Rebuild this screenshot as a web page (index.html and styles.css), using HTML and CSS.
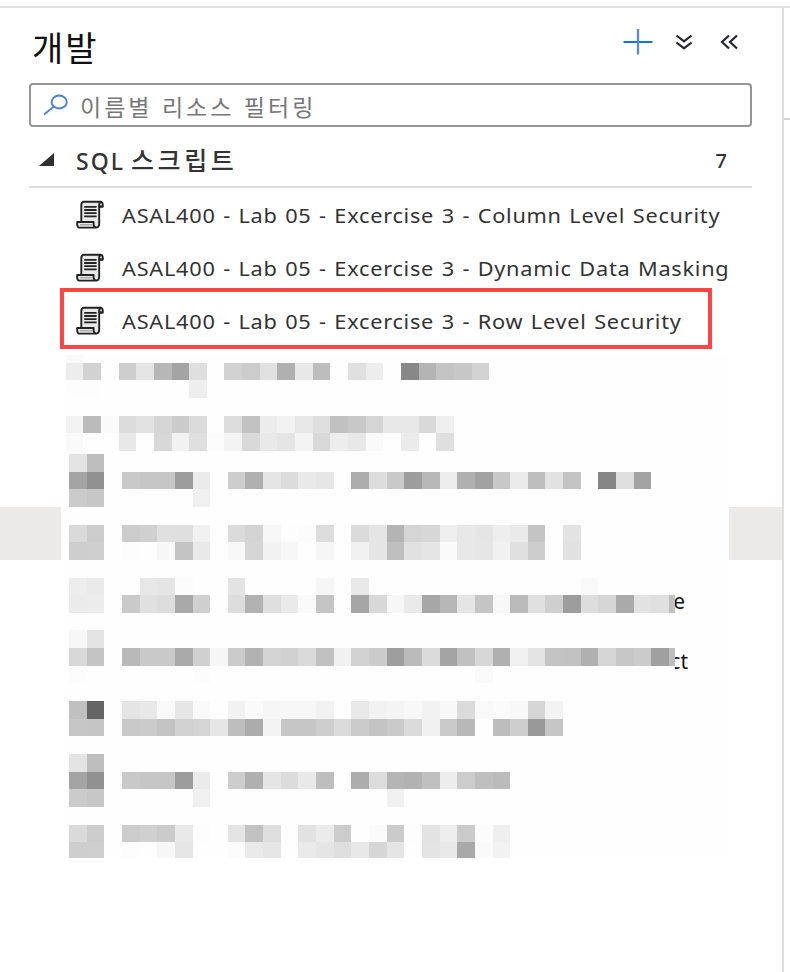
FILE: index.html
```html
<!DOCTYPE html>
<html lang="ko">
<head>
<meta charset="utf-8">
<title>개발</title>
<link rel="stylesheet" href="styles.css">
</head>
<body>
<svg class="defs" width="0" height="0" aria-hidden="true">
  <symbol id="script" viewBox="0 0 30 30">
    <path d="M6.300 21.800V5Q6.300 1.800 9 1.800H25.600Q28.200 2 27.800 6.600L24.200 6.800V24Q24 27.400 21.400 27.600H4Q1.800 27 2.200 22H18.600V24.600Q19 27.400 21.400 27.400" fill="#e8e8e8" stroke="#222" stroke-width="1.900" stroke-linejoin="round"/>
    <path d="M24.200 6.800V4.200Q24.400 2.400 25.800 2M24.200 6.600H27.600" fill="none" stroke="#222" stroke-width="2"/>
    <path d="M9.200 6.800H21.600M9.200 10H21.600M9.200 13.200H21.600M9.200 16.400H21.600" stroke="#222" stroke-width="1.800"/>
    <path d="M5 24.700H18" stroke="#aaa" stroke-width="1.400"/>
  </symbol>
</svg>
<div class="app">
  <main class="panel">
    <header class="head">
      <h1>개발</h1>
      <div class="actions">
        <svg width="30" height="28" viewBox="0 0 30 28"><path d="M.5 14H29.500" stroke="#1275cf" stroke-width="2"/><path d="M15 1V26.500" stroke="#5b87dd" stroke-width="2.300"/></svg>
        <svg width="18" height="18" viewBox="0 0 18 18" fill="none" stroke="#252533" stroke-width="2.200"><path d="M1.500 2.500L9 8.300L16.500 2.500M1.500 9.500L9 15.300L16.500 9.500"/></svg>
        <svg width="18" height="16" viewBox="0 0 18 16" fill="none" stroke="#252533" stroke-width="2.200"><path d="M9 1.500L2 8L9 14.500M17 1.500L10 8L17 14.500"/></svg>
      </div>
    </header>
    <div class="filter">
      <svg width="26" height="22" viewBox="0 0 26 22" fill="none" stroke="#4b80db" stroke-width="1.900"><ellipse cx="16.200" cy="8" rx="7.600" ry="6.500"/><path d="M11 12.500L1 20.500"/></svg>
      <span>이름별 리소스 필터링</span>
    </div>
    <div class="group">
      <svg width="16" height="14" viewBox="0 0 16 14"><path d="M15 0V13H0Z" fill="#303030"/></svg>
      <h2>SQL <span>스크립트</span></h2>
      <b>7</b>
    </div>
    <ul class="items">
      <li><svg width="30" height="30"><use href="#script"/></svg><span>ASAL400 - Lab 05 - Excercise 3 - Column Level Security</span></li>
      <li><svg width="30" height="30"><use href="#script"/></svg><span>ASAL400 - Lab 05 - Excercise 3 - Dynamic Data Masking</span></li>
      <li class="marked"><svg width="30" height="30"><use href="#script"/></svg><span>ASAL400 - Lab 05 - Excercise 3 - Row Level Security</span></li>
    </ul>
    <div class="hidden-items">
      <div class="mosaic first" id="upper"></div>
      <div class="mosaic" id="lower"></div>
    </div>
  </main>
  <aside class="canvas"></aside>
</div>
<script src="mosaic.js"></script>
</body>
</html>
```
FILE: styles.css
```css
* { box-sizing: border-box; }
body {
  margin: 0;
  height: 972px;
  overflow: hidden;
  background: #fff;
  color: #333;
  font-family: "Noto Sans", "Noto Sans CJK KR", sans-serif;
}
.defs { display: block; }
.app {
  display: grid;
  grid-template-columns: 784px 6px;
  height: 966px;
  margin-top: 6px;
  border-top: 2px solid #e0e0e0;
}
.panel { border-right: 2px solid #dedede; }
.canvas { height: 112px; border-bottom: 2px solid #d2d2d2; }
.head {
  display: flex;
  justify-content: space-between;
  height: 75px;
  padding: 19px 44px 0 32px;
}
h1 {
  margin: 0;
  color: #111;
  font: 400 34px/40px "Noto Sans CJK KR", sans-serif;
  letter-spacing: 2px;
}
.actions { display: flex; align-items: center; height: 30px; gap: 22px; }
.actions svg:last-child { margin-left: 5px; }
.filter {
  display: flex;
  align-items: center;
  width: 723px;
  height: 44px;
  margin-left: 29px;
  padding-left: 12px;
  border: 2px solid #969696;
  border-radius: 4px;
  color: #777;
  font: 400 23px/40px "Noto Sans CJK KR", sans-serif;
  letter-spacing: 3px;
}
.filter svg { margin: 0 11px 0 0; }
.filter span { margin-top: 2px; }
.group {
  display: flex;
  align-items: center;
  width: 723px;
  height: 61px;
  margin-left: 29px;
  padding: 8px 25px 0 10px;
  border-bottom: 2px solid #dedede;
}
.group svg { margin-top: -1px; }
h2 {
  flex: 1;
  margin: 0 0 0 21px;
  font: 500 23px/32px "Noto Sans", "Noto Sans CJK KR", sans-serif;
  letter-spacing: 2px;
}
h2 span {
  margin-left: -2px;
  font-size: 25px;
  line-height: 30px;
  letter-spacing: 3.6px;
}
.group b { font-weight: 500; font-size: 20px; }
.items {
  margin: 0;
  padding: 0;
  list-style: none;
}
.items li {
  display: flex;
  align-items: center;
  height: 53px;
  padding-left: 75px;
  gap: 17px;
  font-size: 20.5px;
  line-height: 30px;
  white-space: nowrap;
  letter-spacing: .7px;
  word-spacing: 1.1px;
}
.items span { transform: scaleX(1.06); transform-origin: 0 50%; }
.items svg { flex: none; }
.items .marked {
  width: 652px;
  height: 61px;
  margin: -6px 0 0 60px;
  padding: 4px 0 0 11px;
  border: 4px solid #ff4444;
}
.hidden-items {
  margin-top: 6px;
  padding: 0 53px 112px 61px;
  background: linear-gradient(#ebeae8, #ebeae8) 0 152px / 100% 53px no-repeat;
}
.mosaic { padding-left: 8px; background: #fefefe; }
.mosaic.first { padding-left: 5px; padding-bottom: 3px; }
.strip { display: flex; }
.strip i { flex: none; }
.rest {
  display: flex;
  justify-content: flex-end;
  height: 18px;
  overflow-x: clip;
  overflow-y: visible;
  color: #161616;
  font-size: 21px;
  line-height: 18px;
}
.rest.e { width: 10px; line-height: 12px; }
.rest.ct { width: 13px; line-height: 26px; }
```
FILE: mosaic.js
```javascript
const upperEdges = [66,83,101,119,136,154,172,189,207,224,242,260,277,295,313,330,348,366,383,401,419,436,454,472,489];
const lowerEdges = [69,87,104,122,140,157,175,193,210,228,245,263,281,298,316,334,351,369,387,404,422,440,457,475,493,510,528,545,563,581,598,616,634,651,669,675];

// Each strip: height, grey level per cell (-- is empty), optional trailing text
const upper = [
  [8, "fa"],
  [17, "ed d2 -- ce e5 b7 a4 df -- d2 cc e1 b0 e8 bd -- e0 ed -- 88 b4 c4 c7 d3"],
  [18, "fd fd -- -- -- -- -- ee"],
  [18, ""],
  [17, "f3 bb fa dc e2 d6 cb db -- dd c2 ec f2 e7 df c1 c8 d5 e8 e8 d9 ef"],
  [18, "fa -- -- e8 -- d8 f2 df fc f3 d9 e9 e5 f3 d9 ed e8 fa -- eb -- df"]
];
const lower = [
  [18, "e4 be"],
  [17, "a4 91 -- c9 c6 c6 9d eb -- cd b0 e5 dc e9 e6 -- ad dd c9 9d b8 ed b0 a2 c8 eb be e2 c3 -- 86 de a3"],
  [18, "cb c7 -- -- -- -- -- f0"],
  [18, ""],
  [17, "da cc -- cc d0 e0 df f1 -- db d4 f7 fd fc dd -- db e5 b4 d5 d7 ef e8 e5 ee ea c4 -- e3"],
  [18, "ce cf -- fd -- f7 c4 e9 -- f8 d6 f2 f7 -- f6 -- f1 e5 bf e1 e5 fa e8 e6 f1 e0 cc -- e1"],
  [18, ""],
  [17, "ed ea -- -- e7 e5 fc -- -- e3 -- -- -- -- f6 -- e9 -- -- -- -- -- -- -- -- -- -- -- -- f9"],
  [18, "eb ec -- ca e0 dd a9 cf -- dd b2 de ea fa c5 -- a6 d8 f7 ea a7 b7 e5 c5 f8 ba e0 cf 9d dd d5 aa e2 e0 c1", "e"],
  [17, ""],
  [18, "f7 e4"],
  [18, "d8 c4 -- b9 c9 c9 aa d0 f6 cb b2 d4 d1 da c1 f1 d2 cb 9e bb db a4 c1 d7 b0 f0 e4 c3 c2 b0 d5 c7 cb a0 be", "ct"],
  [17, "fc -- -- -- -- -- -- fc -- -- -- -- -- -- -- -- -- -- -- -- -- -- -- fa"],
  [18, ""],
  [18, "c0 65 -- e5 e8 f9 e6 f9 -- f2 fa f6 f7 f7 f2 -- e9 f2 f4 f8 f2 f8 db f9 fb f8 d6 f3"],
  [17, "c6 c5 -- c9 cb c3 d2 d5 e6 be ac f3 c6 c6 ce db cb c4 ca db f1 ca b8 -- bd ce 99 c6"],
  [18, ""],
  [18, "e4 be"],
  [17, "a4 91 -- c9 c6 c6 9d eb -- cd b0 e5 dc e9 be -- ad dd b5 b2 c0 ed cc bf bb"],
  [18, "cb c7 -- -- -- -- -- f0 -- -- -- -- -- -- -- -- -- -- f0"],
  [18, ""],
  [17, "da cc -- cc d0 cb e9 fd -- e4 c2 de -- e2 eb cc -- fb cb fd e3 ee cb fc ef"],
  [16, "ce cf -- fd -- f7 e6 fe -- fc ea e6 -- ea e5 df e8 d6 e5 -- e4 e9 a9 fa f2"]
];

function draw(id, strips, edges) {
  const root = document.getElementById(id);
  for (const [height, levels, text] of strips) {
    const strip = document.createElement("div");
    strip.className = "strip";
    strip.style.height = height + "px";
    levels.split(" ").forEach((level, k) => {
      const cell = document.createElement("i");
      cell.style.width = edges[k + 1] - edges[k] + "px";
      if (level && level !== "--") cell.style.background = "#" + level.repeat(3);
      strip.append(cell);
    });
    if (text) {
      const rest = document.createElement("span");
      rest.className = "rest " + text;
      rest.textContent = text;
      strip.append(rest);
    }
    root.append(strip);
  }
}
draw("upper", upper, upperEdges);
draw("lower", lower, lowerEdges);
```
